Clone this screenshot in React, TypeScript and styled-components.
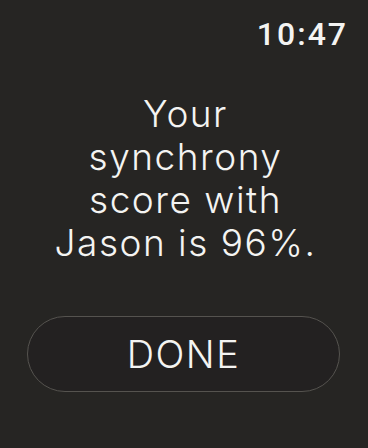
import React from "react";
import styled, { createGlobalStyle } from "styled-components";

const GlobalStyle = createGlobalStyle`
  html, body {
    margin: 0;
    padding: 0;
    background: #262523;
  }
`;

const Screen = styled.div`
  display: flex;
  flex-direction: column;
  width: 368px;
  height: 448px;
  background: #262523;
  color: #f4f4f2;
  box-sizing: border-box;
  padding: 15px 22px 0 27px;
`;

const StatusBar = styled.div`
  display: flex;
  justify-content: flex-end;
  height: 40px;
`;

const Clock = styled.span`
  font-family: Roboto, "Open Sans", sans-serif;
  font-weight: 500;
  font-size: 32px;
  line-height: 38px;
  letter-spacing: 2px;
  margin-right: -2px;
`;

const Message = styled.p`
  margin: 37px 0 0;
  text-align: center;
  font-family: Inter, Lato, sans-serif;
  font-weight: 300;
  font-size: 37px;
  line-height: 43px;
  letter-spacing: 1.5px;
  padding-right: 2px;
`;

const DoneButton = styled.button`
  display: flex;
  align-items: center;
  justify-content: center;
  margin-top: 52px;
  width: 313px;
  height: 76px;
  border: 1.5px solid #55534f;
  border-radius: 38px;
  background: #232121;
  color: #f4f4f2;
  font-family: Inter, Lato, sans-serif;
  font-weight: 300;
  font-size: 38px;
  letter-spacing: 1.5px;
  cursor: pointer;
`;

const App = () => {
  return (
    <>
      <GlobalStyle />
      <Screen>
        <StatusBar>
          <Clock>10:47</Clock>
        </StatusBar>
        <Message>
          Your
          <br />
          synchrony
          <br />
          score with
          <br />
          Jason is 96%.
        </Message>
        <DoneButton>DONE</DoneButton>
      </Screen>
    </>
  );
};

export default App;
